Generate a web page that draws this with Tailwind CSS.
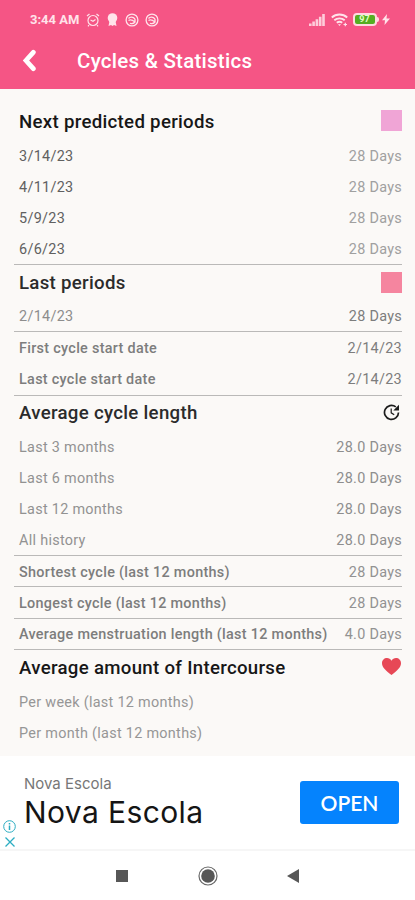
<!DOCTYPE html>
<html lang="en">

<head>
    <title>Cycles &amp; Statistics</title>
    <meta charset="UTF-8">
    <meta name="viewport" content="width=device-width, initial-scale=1.0">
    <script src="https://cdn.jsdelivr.net/npm/@tailwindcss/browser@4"></script>
</head>

<body class="flex h-[900px] w-[415px] flex-col overflow-hidden bg-[#fbf9f7] font-[Roboto,sans-serif] text-[#7d7d7d]">
    <header class="h-[89px] shrink-0 bg-[#f55585] text-white">
        <!-- status bar -->
        <div class="flex h-[39px] items-center pl-[30px] pr-[25px] text-[#ffe3ea]">
            <span class="w-[50px] whitespace-nowrap text-[13px] font-bold">3:44 AM</span>
            <svg class="ml-[6px] size-[14px]" viewBox="0 0 14 14" fill="none" stroke="currentColor" stroke-width="1.2">
                <circle cx="7" cy="7.5" r="5" />
                <path d="M1 3l2.500-2M13 3l-2.500-2M4.500 7l2.500 1.200L9.500 6.500M3 12l-1 1.300M11 12l1 1.300" />
            </svg>
            <svg class="ml-[7px] h-[14px] w-[11px]" viewBox="0 0 11 14" fill="currentColor">
                <circle cx="5.500" cy="5" r="4.800" />
                <path d="M2.500 8h6l1 5-2.500-1-1.500 1-1.500-1-2.500 1z" />
            </svg>
            <svg class="ml-[7px] size-[14px]" viewBox="0 0 14 14" fill="none" stroke="currentColor" stroke-width="1.300">
                <circle cx="7" cy="7" r="5.900" />
                <path d="M3.500 5.500C5 3.500 8 3.500 10 6M3.500 7.500c2-1.200 4-.5 6.500 1.500M5 10.200c1.500.8 3.500.5 5-1.200V6" />
            </svg>
            <svg class="ml-[5.500px] size-[14px]" viewBox="0 0 14 14" fill="none" stroke="currentColor" stroke-width="1.300">
                <circle cx="7" cy="7" r="5.900" />
                <path d="M3.500 5.500C5 3.500 8 3.500 10 6M3.500 7.500c2-1.200 4-.5 6.500 1.500M5 10.200c1.500.8 3.500.5 5-1.200V6" />
            </svg>
            <svg class="ml-auto h-[12px] w-[16px]" viewBox="0 0 16 12" fill="currentColor">
                <path d="M0 9.500h2.600V12H0zM3.300 7.500h2.600V12H3.300zM6.600 5.200h2.600V12H6.600zM9.900 2.800h2.600V12H9.900zM13.200 0h2.600v12h-2.600z" opacity=".85" />
            </svg>
            <svg class="ml-[6px] h-[14px] w-[17px]" viewBox="0 0 17 14" fill="none" stroke="currentColor" stroke-width="1.900">
                <path d="M.8 4.500c4.300-4 11.100-4 15.400 0M3.300 7.300c3-2.600 7.400-2.600 10.400 0M5.800 9.800c1.600-1.300 3.800-1.300 5.400 0" />
                <path d="M7 11.300h3l-1.500 1.700z" fill="currentColor" stroke="none" />
                <path d="M12.500 11.500h3.500M14.300 9.800v3.500" stroke-width="1.200" />
            </svg>
            <div class="ml-[5px] flex h-[12.500px] w-[24px] items-center justify-center rounded-[4px] border-2 border-[#ffd9e0] bg-[#55ae22] text-[9px] font-bold leading-none text-[#e2ffc8]">97</div>
            <div class="h-[5px] w-[2px] rounded-r bg-[#ffd9e0]"></div>
            <svg class="ml-[3.500px] h-[11px] w-[8px]" viewBox="0 0 8 11" fill="currentColor">
                <path d="M5 0L0 6.300h3L2.500 11 8 4.500H4.500z" />
            </svg>
        </div>
        <!-- title bar -->
        <div class="flex h-[44px] items-center pl-[22px]">
            <svg class="-mt-[2px] h-[23px] w-[15px]" viewBox="0 0 15 23" fill="none" stroke="currentColor" stroke-width="4.800" stroke-linecap="round">
                <path d="M11.300 3.300L4 11.500l7.300 8.200" />
            </svg>
            <h1 class="ml-[40px] pt-[1px] text-[20.500px] font-medium tracking-[0.260px]">Cycles &amp; Statistics</h1>
        </div>
    </header>

    <main class="h-[667px] shrink-0 pl-[14px] pr-[13px] pt-[15px] text-[14.400px] tracking-[0.300px]">
        <section class="border-b-[1.500px] border-[#bab9b8] pl-[5px]">
            <div class="flex h-[36px] items-center justify-between">
                <h2 class="pt-[2px] text-[18.650px] font-medium text-[#171717]">Next predicted periods</h2>
                <div class="mb-[3px] size-[21px] bg-[#f0a5d6]"></div>
            </div>
            <div class="flex h-[31.100px] items-center justify-between pt-[2px]"><span class="text-[#606060]">3/14/23</span><span class="text-[#a0a0a0]">28 Days</span></div>
            <div class="flex h-[31.100px] items-center justify-between pt-[2px]"><span class="text-[#606060]">4/11/23</span><span class="text-[#a0a0a0]">28 Days</span></div>
            <div class="flex h-[31.100px] items-center justify-between pt-[2px]"><span class="text-[#606060]">5/9/23</span><span class="text-[#a0a0a0]">28 Days</span></div>
            <div class="flex h-[31.100px] items-center justify-between pt-[2px]"><span class="text-[#606060]">6/6/23</span><span class="text-[#a0a0a0]">28 Days</span></div>
        </section>

        <section class="border-b-[1.500px] border-[#bab9b8] pl-[5px]">
            <div class="flex h-[35.500px] items-center justify-between">
                <h2 class="pt-[2px] text-[18.650px] font-medium text-[#2b2b2b]">Last periods</h2>
                <div class="mb-[2px] size-[21px] bg-[#f5859f]"></div>
            </div>
            <div class="flex h-[30.500px] items-center justify-between pt-[2px]"><span class="text-[#8d8d8d]">2/14/23</span><span>28 Days</span></div>
        </section>

        <section class="border-b-[1.500px] border-[#bab9b8] pl-[5px]">
            <div class="flex h-[31.200px] items-center justify-between pt-[2px]"><span class="font-medium">First cycle start date</span><span>2/14/23</span></div>
            <div class="flex h-[31.200px] items-center justify-between pt-[2px]"><span class="font-medium">Last cycle start date</span><span>2/14/23</span></div>
        </section>

        <section class="border-b-[1.500px] border-[#bab9b8] pl-[5px]">
            <div class="flex h-[35px] items-center justify-between">
                <h2 class="pt-[2px] text-[18.650px] font-medium text-[#2b2b2b]">Average cycle length</h2>
                <svg class="mb-[2px] mr-[2px] size-[17px]" viewBox="0 0 17 17" fill="none" stroke="#1c1c1c" stroke-width="1.700">
                    <path d="M12.800 2.900A7 7 0 1 0 15.500 8.500" />
                    <path d="M8.200 4.500v4.300l3 1.900" stroke-width="1.200" />
                    <path d="M16 .8v5.700h-5.700z" fill="#1c1c1c" stroke="none" />
                </svg>
            </div>
            <div class="flex h-[31.100px] items-center justify-between pt-[3px]"><span class="text-[#929292]">Last 3 months</span><span class="text-[#8e8e8e]">28.0 Days</span></div>
            <div class="flex h-[31.100px] items-center justify-between pt-[3px]"><span class="text-[#929292]">Last 6 months</span><span class="text-[#8e8e8e]">28.0 Days</span></div>
            <div class="flex h-[31.100px] items-center justify-between pt-[3px]"><span class="text-[#929292]">Last 12 months</span><span class="text-[#8e8e8e]">28.0 Days</span></div>
            <div class="flex h-[31.100px] items-center justify-between pt-[3px]"><span class="text-[#929292]">All history</span><span class="text-[#8e8e8e]">28.0 Days</span></div>
        </section>

        <div class="flex h-[31.200px] items-center justify-between border-b-[1.500px] border-[#bab9b8] pl-[5px] pt-[3px]"><span class="font-medium">Shortest cycle (last 12 months)</span><span class="text-[#929292]">28 Days</span></div>
        <div class="flex h-[31.200px] items-center justify-between border-b-[1.500px] border-[#bab9b8] pl-[5px] pt-[2px]"><span class="font-medium">Longest cycle (last 12 months)</span><span class="text-[#929292]">28 Days</span></div>
        <div class="flex h-[31.200px] items-center justify-between border-b-[1.500px] border-[#bab9b8] pl-[5px] pt-[2px]"><span class="font-medium">Average menstruation length (last 12 months)</span><span class="text-[#929292]">4.0 Days</span></div>

        <section class="pl-[5px]">
            <div class="flex h-[36px] items-center justify-between">
                <h2 class="pt-[2px] text-[18.650px] font-medium text-[#171717]">Average amount of Intercourse</h2>
                <svg class="mb-[2px] mr-[1px] h-[17px] w-[19px]" viewBox="0 0 19 17" fill="#e74856">
                    <path d="M9.500 17C4 12.500 0 9.500 0 5.200 0 2 2.300 0 5 0c1.900 0 3.500 1 4.500 2.700C10.500 1 12.100 0 14 0c2.700 0 5 2 5 5.200 0 4.300-4 7.300-9.500 11.800z" />
                </svg>
            </div>
            <div class="flex h-[31.200px] items-center pt-[3px] text-[#969696]">Per week (last 12 months)</div>
            <div class="flex h-[31.200px] items-center pt-[2px] text-[#969696]">Per month (last 12 months)</div>
        </section>
    </main>

    <!-- ad banner -->
    <aside class="flex h-[95px] shrink-0 items-center border-b-2 border-[#f6f6f6] bg-white pr-[16px]">
        <div class="flex w-[24px] flex-col items-center self-end pb-[2px] pr-[5px]">
            <svg class="size-[13px]" viewBox="0 0 13 13" fill="none" stroke="#2cadc2">
                <circle cx="6.500" cy="6.500" r="5.800" />
                <path d="M6.500 5.500v4.500M6.500 3v1.500" stroke-width="1.500" />
            </svg>
            <svg class="mt-[4px] size-[10px]" viewBox="0 0 10 10" fill="none" stroke="#2cadc2" stroke-width="1.300">
                <path d="M.5.5l9 9M9.500.5l-9 9" />
            </svg>
        </div>
        <div class="-mt-[1px] flex flex-col font-[Inter,sans-serif]">
            <span class="text-[15px] leading-[20px] text-[#777]">Nova Escola</span>
            <span class="text-[30px] leading-[36px] tracking-[0.400px] text-[#151515]">Nova Escola</span>
        </div>
        <button class="ml-auto h-[43px] w-[99px] rounded-[3px] bg-[#0583fd] font-[Lato,sans-serif] text-[21px] font-semibold text-white">OPEN</button>
    </aside>

    <!-- system navigation -->
    <nav class="flex flex-1 items-center bg-white pl-[116px]">
        <div class="size-[12px] bg-[#575757]"></div>
        <svg class="ml-[70px] size-[20px]" viewBox="0 0 20 20" fill="#575757">
            <circle cx="10" cy="10" r="9" fill="none" stroke="#686868" stroke-width="1.200" />
            <circle cx="10" cy="10" r="6.800" />
        </svg>
        <svg class="ml-[69px] h-[14px] w-[12px]" viewBox="0 0 12 14" fill="#575757">
            <path d="M12 0v14L0 7z" />
        </svg>
    </nav>
</body>

</html>
